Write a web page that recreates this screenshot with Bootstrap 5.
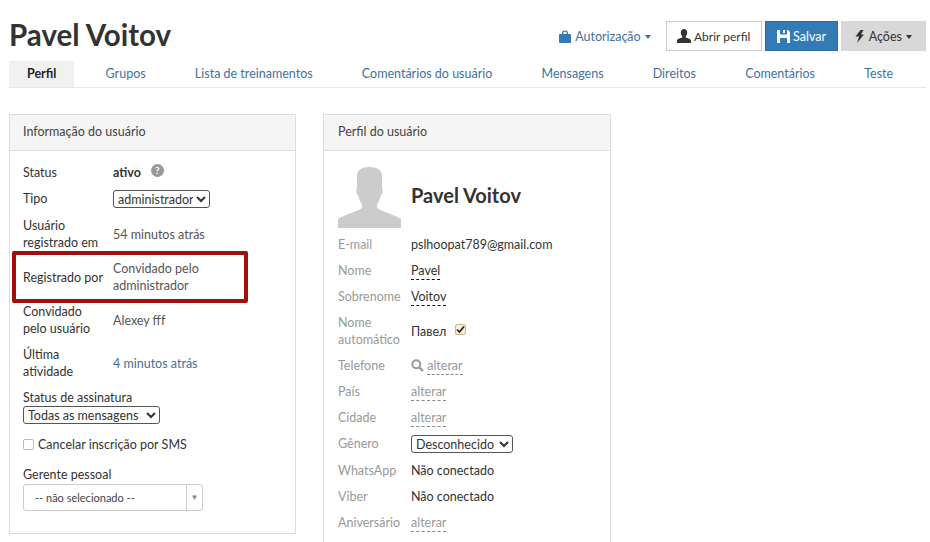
<!DOCTYPE html>
<html lang="pt">
<head>
<meta charset="utf-8">
<title>Pavel Voitov</title>
<link href="https://cdn.jsdelivr.net/npm/bootstrap@5.3.0/dist/css/bootstrap.min.css" rel="stylesheet">
<style>
html,body{height:542px;overflow:hidden}
body{font-family:Lato,"Liberation Sans",sans-serif;font-size:12.5px;line-height:17px;color:#333;background:#fff}
.pg{padding:0 4px 0 9px;position:relative}
.ttl{font-size:29.5px;line-height:36px;font-weight:700;color:#333;margin:0}
.topbar{padding-top:17px;height:61px}
.tlink{color:#3f719c;text-decoration:none;margin-right:12px}
.tlink svg{margin-right:1px}
.tlink svg,.tbtn svg{vertical-align:-2px}
.tbtn{font-size:12.5px;line-height:17px;padding:5px 11px;height:30px;border-radius:0;margin-left:3px;white-space:nowrap}
.b-w{background:#fff;border:1px solid #ccc;color:#333;font-size:12px;width:96px;padding:5px 0}
.b-b{background:#337ab7;border:1px solid #2e6da4;color:#fff}
.b-g{background:#d8d8d8;border:1px solid #d8d8d8;color:#333;width:85px;padding:5px 0}
.b-g svg{margin-right:2px}
.crt{display:inline-block;border-top:4px solid currentColor;border-left:3.500px solid transparent;border-right:3.500px solid transparent;vertical-align:2px;margin-left:1px}
.tabs{border-bottom:1px solid #e7e7e7;gap:13.2px;height:27px;flex-wrap:nowrap}
.tabs .nav-link{padding:4px 18px;line-height:18px;height:26px;color:#3f719c;font-size:12.5px;white-space:nowrap}
.tabs .nav-link.active{background:#f1f1f1;color:#222;font-weight:700;border-radius:0}
.cols{margin-top:26px;gap:27px;align-items:flex-start}
.pnl{border:1px solid #ddd;border-radius:0;width:287px;flex:none}
.pnl .card-header{background:#f5f5f5;border-bottom:1px solid #ddd;border-radius:0;padding:8px 13px;height:36px;line-height:17px;color:#444}
.pnl .card-body{padding:13px 13px 0}
.lft{height:420px}
.rgt{width:288px;height:600px}
.rgt .card-header,.rgt .card-body{padding-left:14px}
.rw{display:flex;align-items:center;margin-bottom:9px;min-height:17px}
.lb{width:90px;flex:none;padding-right:7px}
.rgt .lb{width:73px;padding-right:0;color:#999}
.up{position:relative;top:-1px}
.vl{color:#555}
.rgt .vl{color:#333}
.sel{font-family:inherit;font-size:12.5px;line-height:15px;height:18px;padding:0;border:1px solid #555;border-radius:3px;background:#fff;color:#333}
.sel-a{width:97px}
.sel-b{width:137px}
.sel-c{width:102px}
.dsh{border-bottom:1px dashed #111;color:#333;text-decoration:none;display:inline-block;line-height:16px;margin-bottom:-1px}
.dsh.mut{border-color:#888;color:#999}
.q{display:inline-block;width:13px;height:13px;border-radius:50%;background:#999;color:#fff;font-size:10px;line-height:13px;text-align:center;font-weight:700;margin-left:10px;vertical-align:3px}
.cbx{width:11px;height:11px;border:1px solid #bbb;border-radius:2px;display:inline-block;flex:none;margin-right:4px;background:#fff}
.cbx-on{background:#fbeed5;border-color:#c9b68d;margin-left:9px;position:relative;top:-2px;display:inline-flex;align-items:center;justify-content:center}
.combo{width:180px;height:27px;border:1px solid #ccc;border-radius:3px;display:flex;font-size:11px;color:#444;align-items:center;margin-top:1px}
.combo span:first-child{flex:1;padding-left:11px}
.combo span:last-child{width:16px;height:100%;border-left:1px solid #ccc;color:#888;font-size:8px;display:flex;align-items:center;justify-content:center}
.hilite{position:absolute;left:12px;top:251px;width:236px;height:52px;border:4px solid #a11008;border-radius:2px;pointer-events:none}
.nm{font-size:20px;font-weight:700;color:#333;line-height:24px;margin-left:10px;position:relative;top:-3px}
.av{width:63px;height:61px;flex:none;display:block}
</style>
</head>
<body>
<div class="pg">
  <div class="topbar d-flex justify-content-between align-items-start">
    <h1 class="ttl">Pavel Voitov</h1>
    <div class="d-flex align-items-center" style="margin-top:4px">
      <a class="tlink" href="#"><svg width="12" height="13" viewBox="0 0 12 13"><path fill="#337ab7" d="M3 4V2.800C3 1.300 4.200.5 6 .5s3 .8 3 2.300V4h2.200c.5 0 .8.3.8.8v7.400c0 .5-.3.8-.8.8H.8c-.5 0-.8-.3-.8-.8V4.800C0 4.300.3 4 .8 4zm1.300 0h3.400V3c0-.8-.7-1.200-1.700-1.200S4.300 2.200 4.300 3z"/></svg> Autorização <span class="crt"></span></a>
      <button class="btn tbtn b-w"><svg width="14" height="14" viewBox="0 0 14 14"><path fill="#333" d="M7 0c2 0 3.200 1.400 3.200 3.600 0 1.500-.6 3-1.500 3.800v1.200c1.800.7 5.300 1.300 5.300 3V14H0v-2.400c0-1.700 3.500-2.300 5.300-3V7.400C4.400 6.600 3.800 5.100 3.800 3.600 3.800 1.400 5 0 7 0z"/></svg> Abrir perfil</button>
      <button class="btn tbtn b-b"><svg width="13" height="13" viewBox="0 0 13 13"><path fill="#fff" fill-rule="evenodd" d="M0 0h11l2 2v11H0zM3 0v4.500h7V0H8v3H6V0zM3 8v5h7V8z"/></svg> Salvar</button>
      <button class="btn tbtn b-g"><svg width="9" height="13" viewBox="0 0 9 13"><path fill="#333" d="M5.500 0h3L6 4.500h3L2 13l2-6.500H.5z"/></svg> Ações <span class="crt"></span></button>
    </div>
  </div>
  <ul class="nav tabs">
    <li class="nav-item"><a class="nav-link active" href="#">Perfil</a></li>
    <li class="nav-item"><a class="nav-link" href="#">Grupos</a></li>
    <li class="nav-item"><a class="nav-link" href="#">Lista de treinamentos</a></li>
    <li class="nav-item"><a class="nav-link" href="#">Comentários do usuário</a></li>
    <li class="nav-item"><a class="nav-link" href="#">Mensagens</a></li>
    <li class="nav-item"><a class="nav-link" href="#">Direitos</a></li>
    <li class="nav-item"><a class="nav-link" href="#">Comentários</a></li>
    <li class="nav-item"><a class="nav-link" href="#">Teste</a></li>
  </ul>
  <div class="d-flex cols">
    <div class="card pnl lft">
      <div class="card-header">Informação do usuário</div>
      <div class="card-body">
        <div class="rw"><div class="lb">Status</div><div><b>ativo</b><span class="q">?</span></div></div>
        <div class="rw"><div class="lb up">Tipo</div><select class="sel sel-a"><option>administrador</option></select></div>
        <div class="rw"><div class="lb">Usuário registrado em</div><div class="vl">54 minutos atrás</div></div>
        <div class="rw"><div class="lb">Registrado por</div><div class="vl">Convidado pelo<br>administrador</div></div>
        <div class="rw"><div class="lb">Convidado pelo usuário</div><div class="vl">Alexey fff</div></div>
        <div class="rw"><div class="lb">Última atividade</div><a href="#" class="text-decoration-none" style="color:#3f719c">4 minutos atrás</a></div>
        <div style="margin-bottom:12px">Status de assinatura<br><select class="sel sel-b"><option>Todas as mensagens</option></select></div>
        <div class="d-flex align-items-center" style="margin-bottom:13px"><span class="cbx"></span>Cancelar inscrição por SMS</div>
        <div>Gerente pessoal</div>
        <div class="combo"><span>-- não selecionado --</span><span>▼</span></div>
      </div>
    </div>
    <div class="card pnl rgt">
      <div class="card-header">Perfil do usuário</div>
      <div class="card-body">
        <div class="d-flex align-items-center" style="margin-bottom:8px;padding-top:3px">
          <svg class="av" viewBox="0 0 63 61"><path fill="#ccc" d="M31 0c8 0 13 3 13 9v12c1 1 1 6-1 7-1 4-2 7-4 9v4c4 3 18 7 24 11v9H0v-9c6-4 20-8 24-11v-4c-2-2-3-5-4-9-2-1-2-6-1-7V9c0-6 5-9 12-9z"/></svg>
          <div class="nm">Pavel Voitov</div>
        </div>
        <div class="rw"><div class="lb">E-mail</div><div class="vl">pslhoopat789@gmail.com</div></div>
        <div class="rw"><div class="lb">Nome</div><a href="#" class="dsh">Pavel</a></div>
        <div class="rw"><div class="lb">Sobrenome</div><a href="#" class="dsh">Voitov</a></div>
        <div class="rw"><div class="lb">Nome automático</div><div class="d-flex align-items-center">Павел<span class="cbx cbx-on"><svg width="9" height="9" viewBox="0 0 9 9"><path d="M1 4.500l2.500 2.500L8 1.500" fill="none" stroke="#222" stroke-width="1.700"/></svg></span></div></div>
        <div class="rw"><div class="lb">Telefone</div><div><svg width="13" height="13" viewBox="0 0 13 13" style="vertical-align:-2px"><circle cx="5.300" cy="5.300" r="4" fill="none" stroke="#999" stroke-width="2"/><path d="M8.300 8.300L12 12" stroke="#999" stroke-width="2.400"/></svg> <a href="#" class="dsh mut">alterar</a></div></div>
        <div class="rw"><div class="lb">País</div><a href="#" class="dsh mut">alterar</a></div>
        <div class="rw"><div class="lb">Cidade</div><a href="#" class="dsh mut">alterar</a></div>
        <div class="rw"><div class="lb up">Gênero</div><select class="sel sel-c"><option>Desconhecido</option></select></div>
        <div class="rw"><div class="lb">WhatsApp</div><div class="vl">Não conectado</div></div>
        <div class="rw"><div class="lb">Viber</div><div class="vl">Não conectado</div></div>
        <div class="rw"><div class="lb">Aniversário</div><a href="#" class="dsh mut">alterar</a></div>
      </div>
    </div>
  </div>
  <div class="hilite"></div>
</div>
<script src="https://cdn.jsdelivr.net/npm/bootstrap@5.3.0/dist/js/bootstrap.bundle.min.js"></script>
</body>
</html>
